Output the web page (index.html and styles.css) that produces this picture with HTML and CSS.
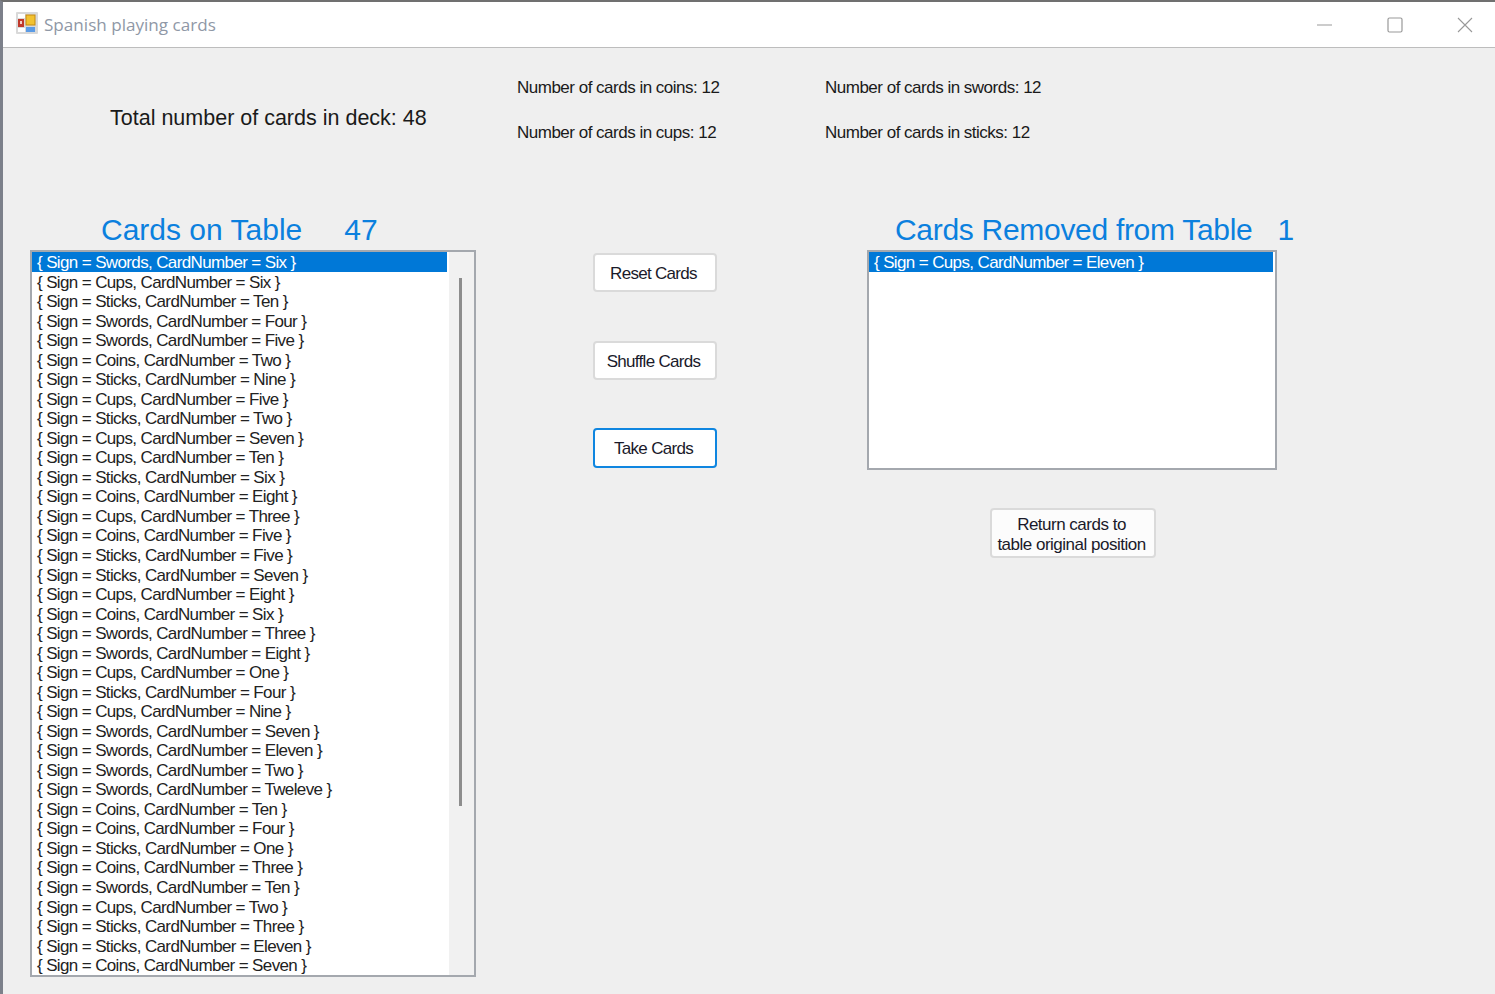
FILE: index.html
```html
<!DOCTYPE html>
<html lang="en">
<head>
<meta charset="utf-8">
<title>Spanish playing cards</title>
<link rel="stylesheet" href="styles.css">
</head>
<body>
<div class="window">
  <header class="titlebar">
    <svg class="app-icon" viewBox="0 0 22 22" width="22" height="22" aria-hidden="true">
      <rect x="0" y="0" width="22" height="22" rx="1" fill="#d9d9d9"/>
      <rect x="2" y="2" width="7" height="4" fill="#fff"/>
      <rect x="2" y="7" width="6" height="8" fill="#c0392b"/>
      <rect x="4" y="9" width="2" height="3" fill="#f3d0c8"/>
      <rect x="2" y="16" width="7" height="4" fill="#fff"/>
      <rect x="10" y="3" width="9" height="10" fill="#f2c230" stroke="#c58a10"/>
      <rect x="10" y="15" width="9" height="5" fill="#5b9be6"/>
    </svg>
    <span class="title-text">Spanish playing cards</span>
    <div class="window-controls">
      <svg class="ctl" viewBox="0 0 16 16" width="16" height="16" aria-hidden="true"><path d="M0 8h15" stroke="#999" fill="none"/></svg>
      <svg class="ctl" viewBox="0 0 16 16" width="16" height="16" aria-hidden="true"><rect x="1" y="1" width="14" height="14" rx="1.5" stroke="#999" stroke-width="1.2" fill="none"/></svg>
      <svg class="ctl" viewBox="0 0 16 16" width="16" height="16" aria-hidden="true"><path d="M1 1l14 14M15 1L1 15" stroke="#999" stroke-width="1.1" fill="none"/></svg>
    </div>
  </header>
  <main class="form">
    <section class="stats">
      <div class="total">Total number of cards in deck: 48</div>
      <div class="stat-grid">
        <span>Number of cards in coins: 12</span>
        <span>Number of cards in swords: 12</span>
        <span>Number of cards in cups: 12</span>
        <span>Number of cards in sticks: 12</span>
      </div>
    </section>
    <section class="panels">
      <div class="panel-left">
        <h2 class="heading heading-left"><span>Cards on Table</span><span>47</span></h2>
        <div class="listbox listbox-tall">
          <ul class="items">
            <li class="selected">{ Sign = Swords, CardNumber = Six }</li>
            <li>{ Sign = Cups, CardNumber = Six }</li>
            <li>{ Sign = Sticks, CardNumber = Ten }</li>
            <li>{ Sign = Swords, CardNumber = Four }</li>
            <li>{ Sign = Swords, CardNumber = Five }</li>
            <li>{ Sign = Coins, CardNumber = Two }</li>
            <li>{ Sign = Sticks, CardNumber = Nine }</li>
            <li>{ Sign = Cups, CardNumber = Five }</li>
            <li>{ Sign = Sticks, CardNumber = Two }</li>
            <li>{ Sign = Cups, CardNumber = Seven }</li>
            <li>{ Sign = Cups, CardNumber = Ten }</li>
            <li>{ Sign = Sticks, CardNumber = Six }</li>
            <li>{ Sign = Coins, CardNumber = Eight }</li>
            <li>{ Sign = Cups, CardNumber = Three }</li>
            <li>{ Sign = Coins, CardNumber = Five }</li>
            <li>{ Sign = Sticks, CardNumber = Five }</li>
            <li>{ Sign = Sticks, CardNumber = Seven }</li>
            <li>{ Sign = Cups, CardNumber = Eight }</li>
            <li>{ Sign = Coins, CardNumber = Six }</li>
            <li>{ Sign = Swords, CardNumber = Three }</li>
            <li>{ Sign = Swords, CardNumber = Eight }</li>
            <li>{ Sign = Cups, CardNumber = One }</li>
            <li>{ Sign = Sticks, CardNumber = Four }</li>
            <li>{ Sign = Cups, CardNumber = Nine }</li>
            <li>{ Sign = Swords, CardNumber = Seven }</li>
            <li>{ Sign = Swords, CardNumber = Eleven }</li>
            <li>{ Sign = Swords, CardNumber = Two }</li>
            <li>{ Sign = Swords, CardNumber = Tweleve }</li>
            <li>{ Sign = Coins, CardNumber = Ten }</li>
            <li>{ Sign = Coins, CardNumber = Four }</li>
            <li>{ Sign = Sticks, CardNumber = One }</li>
            <li>{ Sign = Coins, CardNumber = Three }</li>
            <li>{ Sign = Swords, CardNumber = Ten }</li>
            <li>{ Sign = Cups, CardNumber = Two }</li>
            <li>{ Sign = Sticks, CardNumber = Three }</li>
            <li>{ Sign = Sticks, CardNumber = Eleven }</li>
            <li>{ Sign = Coins, CardNumber = Seven }</li>
          </ul>
          <div class="scrollbar"><div class="thumb"></div></div>
        </div>
      </div>
      <div class="panel-middle">
        <button class="btn btn-reset" type="button">Reset Cards</button>
        <button class="btn" type="button">Shuffle Cards</button>
        <button class="btn btn-focus" type="button">Take Cards</button>
      </div>
      <div class="panel-right">
        <h2 class="heading heading-right"><span class="heading-tight">Cards Removed from Table</span><span>1</span></h2>
        <div class="listbox listbox-short">
          <ul class="items">
            <li class="selected">{ Sign = Cups, CardNumber = Eleven }</li>
          </ul>
        </div>
        <button class="btn btn-wide" type="button">Return cards to<br>table original position</button>
      </div>
    </section>
  </main>
</div>
</body>
</html>
```

FILE: styles.css
```css
* { box-sizing: border-box; }
html, body { margin: 0; padding: 0; }
body { width: 1495px; height: 994px; overflow: hidden; background: #efefef; font-family: "Liberation Sans", Arial, sans-serif; }
.window { width: 1495px; height: 994px; border-top: 2px solid #707070; border-left: 3px solid #7c808a; display: flex; flex-direction: column; background: #efefef; }
.titlebar { height: 46px; flex: none; background: #fff; border-bottom: 1px solid #bdbdbd; display: flex; align-items: center; padding-left: 13px; }
.app-icon { flex: none; margin-top: -3px; }
.title-text { margin-left: 6px; font-family: "Open Sans", sans-serif; font-size: 17.1px; color: #8f98a6; }
.window-controls { margin-left: auto; display: flex; align-items: center; gap: 54px; padding-right: 22px; }
.ctl { display: block; }
.form { flex: 1; display: flex; flex-direction: column; }
.stats { height: 164px; display: flex; flex: none; }
.total { margin-left: 107px; margin-top: 58px; width: 407px; font-size: 21.5px; line-height: 24px; color: #1a1a1a; height: 24px; white-space: nowrap; }
.stat-grid { margin-top: 29px; display: grid; grid-template-columns: 308px auto; grid-auto-rows: 45px; font-size: 17px; letter-spacing: -0.5px; line-height: 22px; color: #1a1a1a; align-content: start; }
.panels { display: flex; align-items: flex-start; }
.panel-left { margin-left: 27px; width: 446px; flex: none; }
.heading { margin: 0; height: 38px; font-weight: 400; font-size: 30px; line-height: 36px; color: #0b80de; display: flex; white-space: nowrap; }
.heading-left { padding-left: 71px; gap: 42px; }
.heading-right { padding-left: 28px; gap: 25px; }
.heading-tight { letter-spacing: -0.3px; }
.listbox { background: #fff; border: 2px solid #a4a8ae; position: relative; }
.listbox-tall { height: 727px; width: 446px; overflow: hidden; }
.listbox-short { height: 220px; width: 410px; }
.items { list-style: none; margin: 0; padding: 0; font-size: 17px; letter-spacing: -0.63px; color: #222; }
.listbox-tall .items { width: 415px; }
.listbox-short .items { width: 404px; }
.items li { padding: 2px 0 0 5px; line-height: 17.53px; white-space: nowrap; }
.items li.selected { background: #0078d7; color: #fff; }
.scrollbar { position: absolute; top: 0; bottom: 0; right: 0; width: 25px; background: #f1f1f1; }
.thumb { position: absolute; top: 26px; left: 10px; width: 3px; height: 528px; background: #8d8d8d; }
.panel-middle { margin-left: 117px; width: 124px; flex: none; padding-top: 41px; display: flex; flex-direction: column; gap: 48px; }
.panel-right { margin-left: 150px; width: 410px; flex: none; }
.btn { display: block; width: 124px; height: 39px; padding: 2px 3px 0 0; background: #fff; border: 2px solid #dadada; border-radius: 4px; font-family: "Liberation Sans", Arial, sans-serif; font-size: 17px; letter-spacing: -0.7px; line-height: 20px; color: #1a1a2a; text-align: center; }
.btn-reset { margin-bottom: 1px; }
.btn-focus { height: 40px; border-color: #0f86e0; }
.btn-wide { width: 166px; height: 50px; padding: 4px 3px 0 0; letter-spacing: -0.5px; line-height: 20px; margin: 38px 0 0 123px; background: #fcfcfc; }
```
